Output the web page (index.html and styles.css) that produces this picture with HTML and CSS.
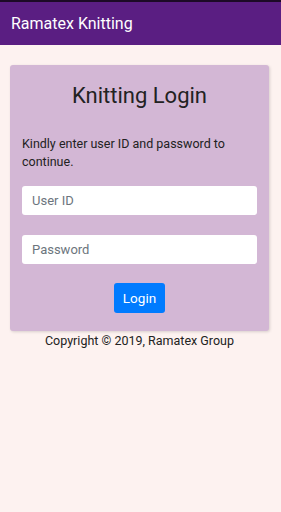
FILE: index.html
```html
<!DOCTYPE html>
<html lang="en">
  <head>
    <meta charset="UTF-8" />
    <meta name="viewport" content="width=device-width, initial-scale=1.0" />
    <title>Ramatex Knitting</title>
    <link rel="stylesheet" href="styles.css">
  </head>
  <body>
    <header class="app-bar">Ramatex Knitting</header>

    <main class="content">
      <div class="login-card">
        <h1>Knitting Login</h1>
        <p class="hint">Kindly enter user ID and password to continue.</p>
        <input type="text" class="field" placeholder="User ID" />
        <input type="password" class="field" placeholder="Password" />
        <div class="actions">
          <button class="login-btn">Login</button>
        </div>
      </div>
      <p class="copyright">Copyright © 2019, Ramatex Group</p>
    </main>
  </body>
</html>
```

FILE: styles.css
```css
body {
  margin: 0;
  background: #fdf2f0;
  font-family: Roboto, "Noto Sans", sans-serif;
  color: #222;
  height: 100vh;
}

.app-bar {
  background: #5a1e82;
  border-top: 2px solid #1c0a26;
  color: #fff;
  font-size: 16px;
  line-height: 43px;
  padding-left: 11px;
  box-sizing: border-box;
  height: 45px;
}

.content {
  padding: 20px 12px 0 10px;
}

.login-card {
  background: #d3b7d5;
  border-radius: 3px;
  box-shadow: 1px 1px 3px rgba(0, 0, 0, 0.15);
  padding: 18px 12px 18px 12px;
  display: flex;
  flex-direction: column;
}

.login-card h1 {
  margin: 0;
  font-size: 22px;
  font-weight: 400;
  line-height: 26px;
  text-align: center;
  color: #222;
}

.hint {
  margin: 25px 0 15px;
  font-size: 12.5px;
  line-height: 18px;
  padding-top: 1px;
}

.field {
  height: 29px;
  border: none;
  border-radius: 3px;
  background: #fff;
  padding: 0 10px;
  font-family: inherit;
  font-size: 13px;
  margin-bottom: 20px;
  box-sizing: border-box;
}

.field::placeholder {
  color: #6c757d;
}

.actions {
  display: flex;
  justify-content: center;
  margin-top: -1px;
}

.login-btn {
  background: #007bff;
  color: #fff;
  border: none;
  border-radius: 3px;
  width: 51px;
  height: 30px;
  font-family: inherit;
  font-size: 13.5px;
  padding: 0;
}

.copyright {
  margin: 2px 0 0;
  text-align: center;
  font-size: 12.5px;
  line-height: 16px;
}
```
